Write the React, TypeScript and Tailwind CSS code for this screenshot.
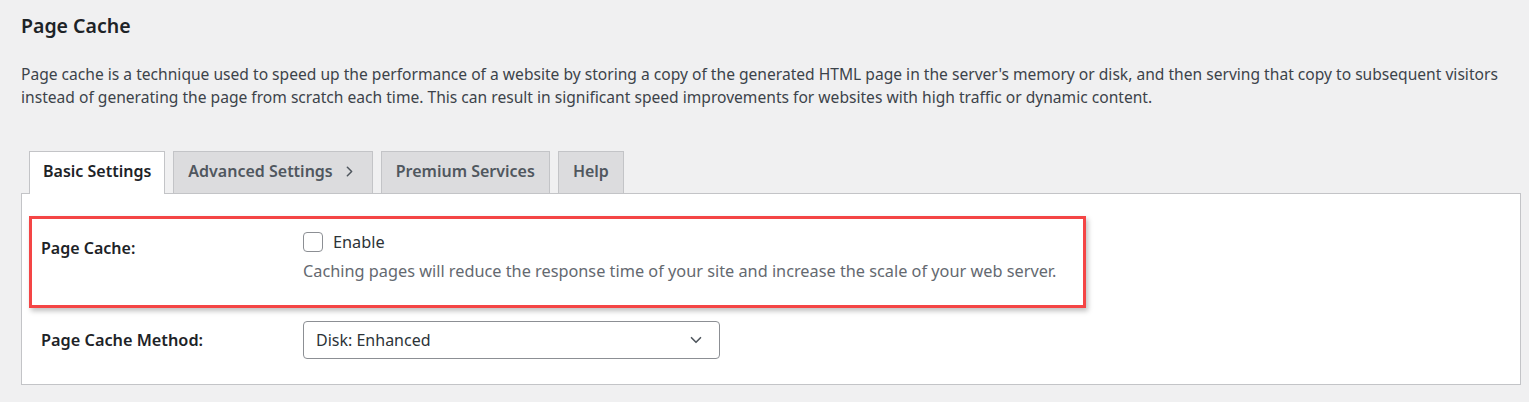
import { ChevronDown, ChevronRight } from "lucide-react";

const tabs = [
  { label: "Basic Settings", active: true, arrow: false },
  { label: "Advanced Settings", active: false, arrow: true },
  { label: "Premium Services", active: false, arrow: false },
  { label: "Help", active: false, arrow: false },
];

export default function App() {
  return (
    <div className="min-h-screen bg-[#f0f0f1] px-[21px] pt-[12px] font-['Noto_Sans',sans-serif] text-[#1d2327]">
      <h1 className="text-[19.5px] font-semibold leading-[28px]">Page Cache</h1>

      {/* Intro copy */}
      <p className="mt-[23px] whitespace-nowrap text-[15.6px] leading-[23px] text-[#3c434a]">
        Page cache is a technique used to speed up the performance of a website by storing a copy of the generated HTML page in the server's memory or disk, and then serving that copy to subsequent visitors
        <br />
        instead of generating the page from scratch each time. This can result in significant speed improvements for websites with high traffic or dynamic content.
      </p>

      {/* Tabs */}
      <div className="mt-[42px] flex items-end gap-[8px] pl-[8px]">
        {tabs.map((tab) => (
          <div
            key={tab.label}
            className={
              tab.active
                ? "relative -mb-px flex h-[43px] items-center border border-b-0 border-[#c3c4c7] bg-white px-[13px] pb-[4px] text-[16px] font-semibold text-[#1d2327]"
                : "flex h-[42px] items-center border border-b-0 border-[#c3c4c7] bg-[#dcdcde] px-[14px] pb-[3px] text-[16px] font-semibold text-[#50575e]"
            }
          >
            {tab.label}
            {tab.arrow && <ChevronRight className="ml-[8px] h-[17px] w-[17px]" strokeWidth={2.2} />}
          </div>
        ))}
      </div>

      {/* Settings panel */}
      <div className="w-[1500px] border border-[#c3c4c7] bg-white pb-[25px] pl-[7px] pt-[22px]">
        <div className="w-[1057px] border-[3px] border-[#f44545] pb-[22px] pl-[9px] pt-[11px] shadow-[2px_3px_5px_rgba(0,0,0,0.25)]">
          <div className="flex">
            <div className="w-[262px] pt-[6px] text-[16px] font-semibold leading-[24px]">Page Cache:</div>
            <div className="text-[16.3px]">
              <label className="flex items-center gap-[10px] leading-[24px]">
                <span className="h-[20px] w-[20px] rounded-[4px] border border-[#8c8f94] bg-white" />
                <span className="text-[#2c3338]">Enable</span>
              </label>
              <p className="mt-[5px] leading-[24px] text-[#646970]">
                Caching pages will reduce the response time of your site and increase the scale of your web server.
              </p>
            </div>
          </div>
        </div>

        <div className="mt-[13px] flex items-center pl-[12px]">
          <div className="w-[262px] text-[16.3px] font-semibold">Page Cache Method:</div>
          <div className="flex h-[38px] w-[417px] items-center justify-between rounded-[4px] border border-[#8c8f94] bg-white pl-[12px] pr-[14px] text-[16px] text-[#2c3338]">
            <span>Disk: Enhanced</span>
            <ChevronDown className="h-[18px] w-[18px] text-[#50575e]" strokeWidth={2.2} />
          </div>
        </div>
      </div>
    </div>
  );
}
